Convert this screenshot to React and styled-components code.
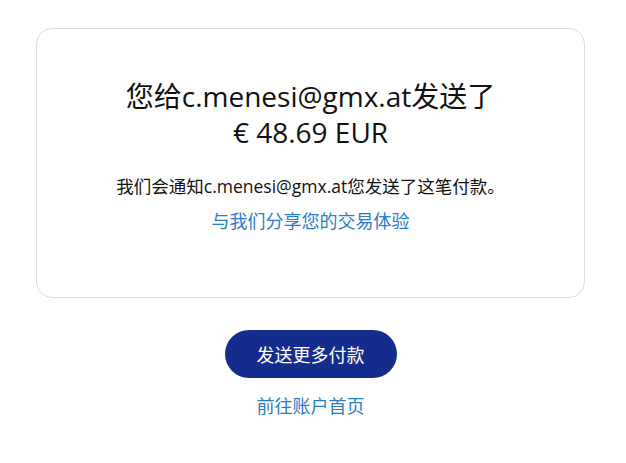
import React from "react"
import styled, { createGlobalStyle } from "styled-components"

const GlobalStyle = createGlobalStyle`
    body {
        margin: 0;
        background: #ffffff;
        font-family: "Open Sans", "Noto Sans CJK SC", sans-serif;
        color: #111111;
    }
`
const Page = styled.main`
    display: flex;
    flex-direction: column;
    align-items: center;
    padding: 28px 41px 0 36px;
`
const Card = styled.section`
    box-sizing: border-box;
    width: 100%;
    height: 270px;
    border: 1px solid #dcdcdc;
    border-radius: 16px;
    display: flex;
    flex-direction: column;
    align-items: center;
    padding-top: 49px;
`
const Headline = styled.h1`
    margin: 0;
    font-size: 28px;
    font-weight: 400;
    line-height: 36px;
    text-align: center;
    color: #111111;
`
const Notice = styled.p`
    margin: 24px 0 0;
    font-size: 17.5px;
    line-height: 24px;
    color: #111111;
`
const TextLink = styled.a`
    display: block;
    margin-top: ${(p) => p.$top || 11}px;
    font-size: 18px;
    line-height: 24px;
    color: #2a7dc9;
    text-decoration: none;
`
const PrimaryButton = styled.button`
    margin-top: 32px;
    width: 172px;
    height: 48px;
    border: none;
    border-radius: 24px;
    background: #142c8e;
    color: #ffffff;
    font-family: "Open Sans", "Noto Sans CJK SC", sans-serif;
    font-size: 18px;
`

export default function App() {
    return (
        <>
            <GlobalStyle />
            <Page>
                <Card>
                    <Headline>
                        您给c.menesi@gmx.at发送了
                        <br />€ 48.69 EUR
                    </Headline>
                    <Notice>我们会通知c.menesi@gmx.at您发送了这笔付款。</Notice>
                    <TextLink href="#">与我们分享您的交易体验</TextLink>
                </Card>
                <PrimaryButton>发送更多付款</PrimaryButton>
                <TextLink href="#" $top={16}>前往账户首页</TextLink>
            </Page>
        </>
    )
}
